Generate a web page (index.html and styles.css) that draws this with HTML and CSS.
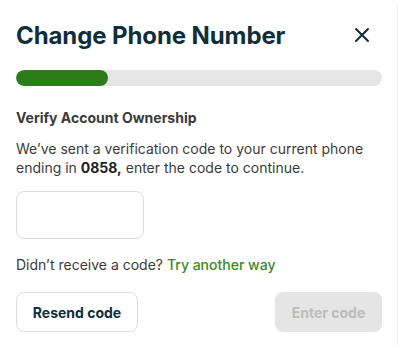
FILE: index.html
```html
<!DOCTYPE html>
<html>
<head>
<meta charset="utf-8">
<link rel="stylesheet" href="styles.css">
</head>
<body>
<div class="card">
  <div class="header">
    <h1 class="title">Change Phone Number</h1>
    <button class="close" aria-label="Close">
      <svg width="16" height="16" viewBox="0 0 16 16"><path d="M2 2L14 14M14 2L2 14" stroke="#0f2e3a" stroke-width="2" stroke-linecap="round"/></svg>
    </button>
  </div>
  <div class="progress"><div class="progress-fill" style="width:25%"></div></div>
  <h2 class="subtitle">Verify Account Ownership</h2>
  <p class="desc"><span class="line">We’ve sent a verification code to your current phone</span><span class="line">ending in <b>0858,</b> enter the code to continue.</span></p>
  <input class="code" type="text">
  <p class="resend-text">Didn’t receive a code? <a class="link">Try another way</a></p>
  <div class="actions">
    <button class="btn btn-outline">Resend code</button>
    <button class="btn btn-disabled">Enter code</button>
  </div>
</div>
</body>
</html>
```
FILE: styles.css
```css
* { box-sizing: border-box; }
html, body { margin: 0; padding: 0; background: #fff; }
body { font-family: Inter, "Noto Sans", sans-serif; width: 400px; height: 345px; overflow: hidden; }
.card {
  width: 398px;
  height: 345px;
  border-right: 1px solid #ececec;
  border-top-right-radius: 8px;
  padding: 20px 16px 0 16px;
  display: flex;
  flex-direction: column;
}
.header { display: flex; align-items: center; justify-content: space-between; height: 30px; }
.title { margin: 0; font-size: 24px; font-weight: 700; color: #0f2e3a; letter-spacing: -0.1px; }
.close { border: 0; background: none; padding: 0; margin-right: 11px; width: 16px; height: 16px; display: flex; }
.progress { margin-top: 20px; height: 16px; background: #e6e6e6; border-radius: 8px; width: 366px; overflow: hidden; }
.progress-fill { height: 100%; background: #2c7d1a; border-radius: 8px; }
.subtitle { margin: 22px 0 0; font-size: 14px; font-weight: 700; color: #3b3b3b; line-height: 20px; }
.desc { margin: 11px 0 0; font-size: 14px; line-height: 19px; color: #3b3b3b; display: flex; flex-direction: column; }
.line { display: block; white-space: nowrap; }
.desc b { font-weight: 700; color: #222; }
.code { margin-top: 14px; width: 128px; height: 48px; border: 1px solid #dcdcdc; border-radius: 8px; outline: none; flex: none; }
.resend-text { margin: 16px 0 0; font-size: 14px; line-height: 20px; color: #3b3b3b; }
.link { color: #3a8a1f; font-weight: 500; }
.actions { margin-top: 17px; display: flex; justify-content: space-between; width: 366px; }
.btn { height: 40px; border-radius: 8px; font-family: inherit; font-size: 14px; font-weight: 700; }
.btn-outline { width: 122px; background: #fff; border: 1px solid #dcdcdc; color: #0f2e3a; }
.btn-disabled { width: 107px; background: #e5e5e5; border: 0; color: #bcbcbc; }
```
